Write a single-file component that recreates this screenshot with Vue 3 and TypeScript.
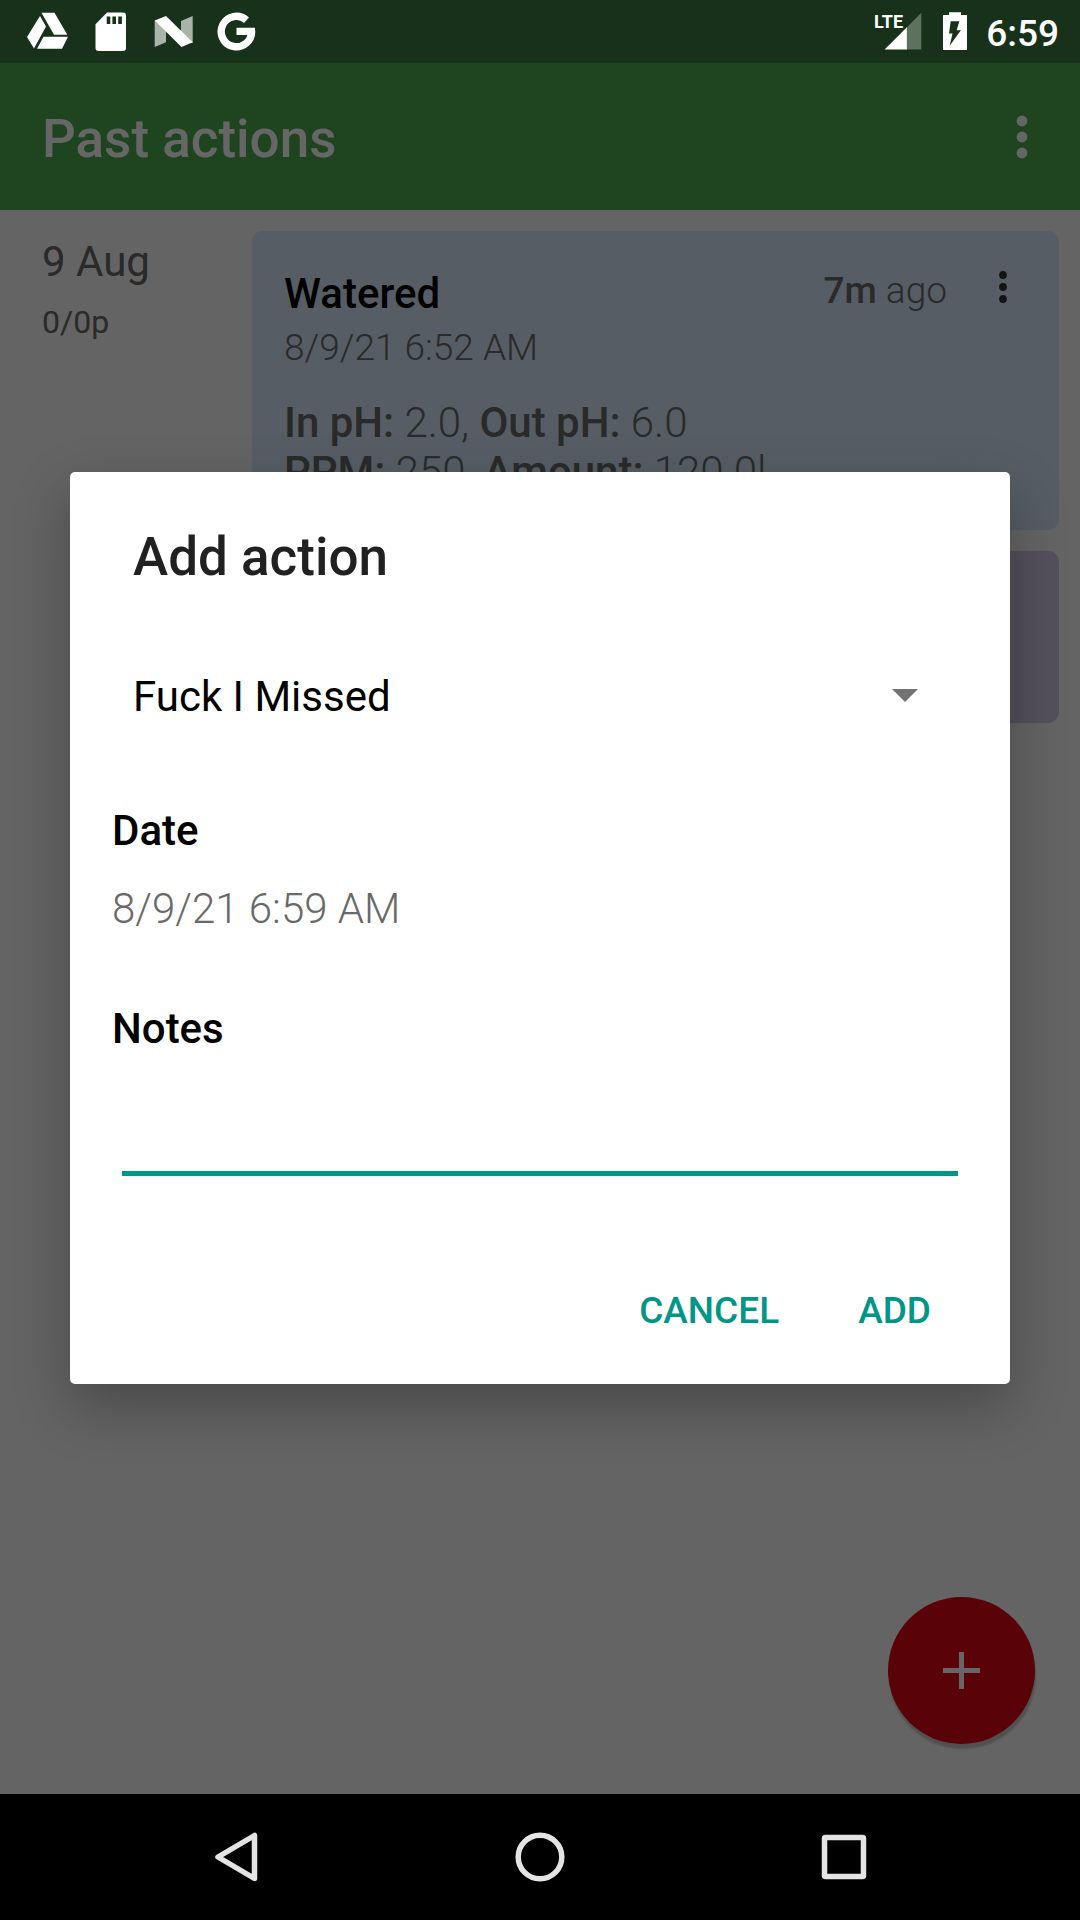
<script setup lang="ts">
import { ref } from 'vue'

interface Measure {
  label: string
  value: string
}

const measures: Measure[][] = [
  [
    { label: 'In pH:', value: '2.0' },
    { label: 'Out pH:', value: '6.0' },
  ],
  [
    { label: 'PPM:', value: '250' },
    { label: 'Amount:', value: '120.0l' },
  ],
]

const actions: string[] = ['Fuck I Missed']
const action = ref<string>(actions[0])
const notes = ref<string>('')
</script>

<template>
  <div class="screen">
    <header class="status">
      <div class="status-left">
        <svg class="status-icon" viewBox="27 0 42 63" fill="#fff" aria-hidden="true">
          <path d="M40 16L46 26.500L34 48.500L27 37zM41.500 12.700H54.500L67.300 34.700H54zM43.500 36.700H68L62 48.700H37z" />
        </svg>
        <svg class="status-icon" viewBox="90 0 42 63" aria-hidden="true">
          <path fill="#fff" fill-rule="evenodd" d="M107 12.500H123Q126 12.500 126 15.500V48Q126 51 123 51H98.500Q95.500 51 95.500 48V24.300zM106.700 16.500V24H110.300V16.500zM112.400 16.500V24H116V16.500zM118.200 16.500V24H121.900V16.500z" />
        </svg>
        <svg class="status-icon" viewBox="153 0 42 63" aria-hidden="true">
          <path fill="#a9b4a9" d="M154.700 20.500V47L166 42.300V20zM181 21L192.700 16V43H181z" />
          <path fill="#fff" d="M154.700 20.500L166 16L192.700 42.300L181.500 47z" />
        </svg>
        <svg class="status-icon" viewBox="216 0 42 63" aria-hidden="true">
          <path fill="none" stroke="#fff" stroke-width="7.400" d="M246.500 20.200A15.200 15.200 0 1 0 251.600 31" />
          <path fill="#fff" d="M236.500 27.800H255V32L253 35H236.500z" />
        </svg>
      </div>
      <div class="status-right">
        <svg class="signal" viewBox="874 0 50 63" aria-hidden="true">
          <text x="874" y="28" class="lte">LTE</text>
          <path fill="#5c725e" d="M921.300 12.800V49.500H906.700V27.400z" />
          <path fill="#fff" d="M884.600 49.500L906.900 27.200V49.500z" />
        </svg>
        <svg class="battery" viewBox="943 0 24 63" aria-hidden="true">
          <path fill="#fff" d="M949 12.300H961V15H967V50H943V15H949z" />
          <path fill="#18311a" d="M950.700 21.300H959.300L956.700 30.300H960.900L949.700 45.700L952.500 33.500H949z" />
        </svg>
        <time class="clock">6:59</time>
      </div>
    </header>

    <div class="window">
      <header class="appbar">
        <h1 class="appbar-title">Past actions</h1>
        <button class="menu" type="button" aria-label="More options">
          <svg viewBox="0 0 12 44" width="12" height="44" fill="currentColor">
            <circle cx="6" cy="6" r="5.400" /><circle cx="6" cy="22" r="5.400" /><circle cx="6" cy="38" r="5.400" />
          </svg>
        </button>
      </header>

      <main class="timeline">
        <div class="day">
          <p class="day-name">9 Aug</p>
          <p class="day-stage">0/0p</p>
        </div>
        <div class="cards">
          <article class="card watered">
            <div class="card-head">
              <h2 class="card-title">Watered</h2>
              <p class="card-age"><b>7m</b> ago</p>
              <button class="card-menu" type="button" aria-label="Action options">
                <svg viewBox="0 0 8 32" width="8" height="32" fill="currentColor">
                  <circle cx="4" cy="4" r="3.900" /><circle cx="4" cy="16" r="3.900" /><circle cx="4" cy="28" r="3.900" />
                </svg>
              </button>
            </div>
            <p class="card-date">8/9/21 6:52 AM</p>
            <div class="measures">
              <p v-for="(row, r) in measures" :key="r">
                <template v-for="(m, i) in row" :key="m.label"><template v-if="i">, </template><b>{{ m.label }}</b> {{ m.value }}</template>
              </p>
            </div>
          </article>
          <article class="card stage"></article>
        </div>
      </main>

      <button class="fab" type="button" aria-label="Add">
        <svg viewBox="0 0 37 37" width="37" height="37" stroke="currentColor" stroke-width="5">
          <path d="M18.500 0V37M0 18.500H37" />
        </svg>
      </button>

      <div class="scrim">
        <form class="dialog" role="dialog" aria-labelledby="dialog-title" @submit.prevent>
          <h2 id="dialog-title" class="dialog-title">Add action</h2>
          <div class="spinner">
            <select v-model="action" aria-labelledby="dialog-title">
              <option v-for="a in actions" :key="a" :value="a">{{ a }}</option>
            </select>
            <svg class="caret" viewBox="0 0 26 13" width="26" height="13" aria-hidden="true">
              <path fill="#737373" d="M0 0H26L13 13z" />
            </svg>
          </div>
          <h3 class="label">Date</h3>
          <p class="date-value">8/9/21 6:59 AM</p>
          <label class="label notes-label" for="notes">Notes</label>
          <input id="notes" v-model="notes" class="notes" type="text" />
          <div class="actions">
            <button type="button">CANCEL</button>
            <button type="submit">ADD</button>
          </div>
        </form>
      </div>
    </div>

    <nav class="navbar">
      <button type="button" aria-label="Back">
        <svg viewBox="0 0 50 50" width="50" height="50"><path d="M43.500 3.500V46.500L7 25z" /></svg>
      </button>
      <button type="button" aria-label="Home">
        <svg viewBox="0 0 50 50" width="50" height="50"><circle cx="25" cy="25" r="21.800" /></svg>
      </button>
      <button type="button" aria-label="Recents">
        <svg viewBox="0 0 50 50" width="50" height="50"><rect x="5.500" y="5.500" width="39" height="39" rx="1" /></svg>
      </button>
    </nav>
  </div>
</template>

<style>
body {
  margin: 0;
  background: #000;
}
</style>

<style scoped>
.screen {
  display: flex;
  flex-direction: column;
  min-height: 100vh;
  font-family: Roboto, "Liberation Sans", sans-serif;
  font-size: 42px;
  line-height: 49px;
}

h1, h2, h3, p {
  margin: 0;
  font-weight: 300;
  font-size: inherit;
}

b {
  font-weight: 500;
}

button {
  padding: 0;
  border: 0;
  background: none;
  color: inherit;
  font: inherit;
}

svg {
  display: block;
}

.status {
  display: flex;
  justify-content: space-between;
  height: 63px;
  padding: 0 21px 0 27px;
  background: #18311a;
  color: #fff;
}

.status-left {
  display: flex;
  gap: 21px;
}

.status-right {
  display: flex;
  align-items: center;
  gap: 19px;
}

.status-icon {
  width: 42px;
  height: 63px;
}

.signal {
  width: 50px;
  height: 63px;
}

.lte {
  fill: #fff;
  font-size: 18px;
  font-weight: 700;
}

.battery {
  width: 24px;
  height: 63px;
}

.clock {
  padding-top: 3px;
  font-size: 37px;
  line-height: 43px;
  font-weight: 500;
}

.window {
  position: relative;
  display: flex;
  flex-direction: column;
  flex: 1;
  background: #fafafa;
}

.appbar {
  display: flex;
  align-items: center;
  justify-content: space-between;
  height: 147px;
  padding: 0 42px;
  box-sizing: border-box;
  background: #4daa50;
  color: #fff;
}

.appbar-title {
  padding-top: 4px;
  font-size: 53px;
  line-height: 62px;
  font-weight: 500;
}

.menu {
  display: grid;
  place-items: center;
  width: 32px;
  height: 96px;
}

.timeline {
  display: flex;
  padding: 21px 21px 21px 42px;
  color: #696969;
}

.day {
  flex: 0 0 210px;
  padding-top: 6px;
}

.day p {
  font-weight: 400;
}

.day .day-stage {
  margin-top: 18px;
  font-size: 32px;
  line-height: 37px;
}

.cards {
  display: flex;
  flex: 1;
  flex-direction: column;
  gap: 21px;
}

.card {
  border-radius: 11px;
}

.watered {
  padding: 38px 32px 34px;
  background: #d7e8fa;
}

.stage {
  min-height: 172px;
  background: #d2c8e6;
}

.card-head {
  display: flex;
  align-items: flex-start;
}

.card-title {
  flex: 1;
  color: #000;
  font-weight: 500;
}

.card-age {
  margin-right: 32px;
  font-size: 37px;
  line-height: 43px;
}

.card-menu {
  display: grid;
  place-items: center;
  width: 48px;
  height: 36px;
  color: #333;
}

.card-date {
  margin-top: 8px;
  font-size: 37px;
  line-height: 43px;
}

.measures {
  margin-top: 29px;
}

.fab {
  position: absolute;
  right: 45px;
  bottom: 50px;
  display: grid;
  place-items: center;
  width: 147px;
  height: 147px;
  border-radius: 50%;
  background: #df0716;
  color: #fff;
  box-shadow: 1px 5px 2px rgba(0, 0, 0, 0.2);
}

.scrim {
  position: absolute;
  inset: 0;
  display: flex;
  align-items: center;
  padding: 0 70px 2px;
  background: rgba(0, 0, 0, 0.6);
}

.dialog {
  display: flex;
  flex: 1;
  flex-direction: column;
  padding: 54px 42px 26px;
  border-radius: 5px;
  background: #fff;
  color: #000;
  box-shadow: 0 22px 56px rgba(0, 0, 0, 0.28);
}

.dialog-title {
  padding-left: 21px;
  color: #212121;
  font-size: 53px;
  line-height: 62px;
  font-weight: 500;
}

.spinner {
  position: relative;
  margin: 67px 0;
}

.spinner select {
  display: block;
  width: 100%;
  height: 84px;
  padding: 0 84px 0 21px;
  border: 0;
  appearance: none;
  background: none;
  color: #000;
  font: inherit;
}

.caret {
  position: absolute;
  top: 34px;
  right: 50px;
  pointer-events: none;
}

.label {
  font-weight: 500;
}

.date-value {
  margin-top: 29px;
  color: #696969;
}

.notes-label {
  margin-top: 71px;
}

.notes {
  height: 102px;
  margin: 21px 10px 0;
  padding: 0;
  border: 0;
  border-bottom: 5px solid #009688;
  box-sizing: border-box;
  outline: 0;
  background: none;
  font: inherit;
}

.actions {
  display: flex;
  justify-content: flex-end;
  gap: 15px;
  margin-top: 88px;
  padding-right: 5px;
}

.actions button {
  height: 94px;
  padding: 0 32px;
  color: #009688;
  font-size: 37px;
  line-height: 43px;
  font-weight: 500;
}

.navbar {
  display: flex;
  height: 126px;
  padding: 0 84px;
  background: #000;
}

.navbar button {
  display: grid;
  flex: 1;
  place-items: center;
}

.navbar svg {
  fill: none;
  stroke: #e4e4e4;
  stroke-width: 5.500;
  stroke-linejoin: round;
}
</style>
